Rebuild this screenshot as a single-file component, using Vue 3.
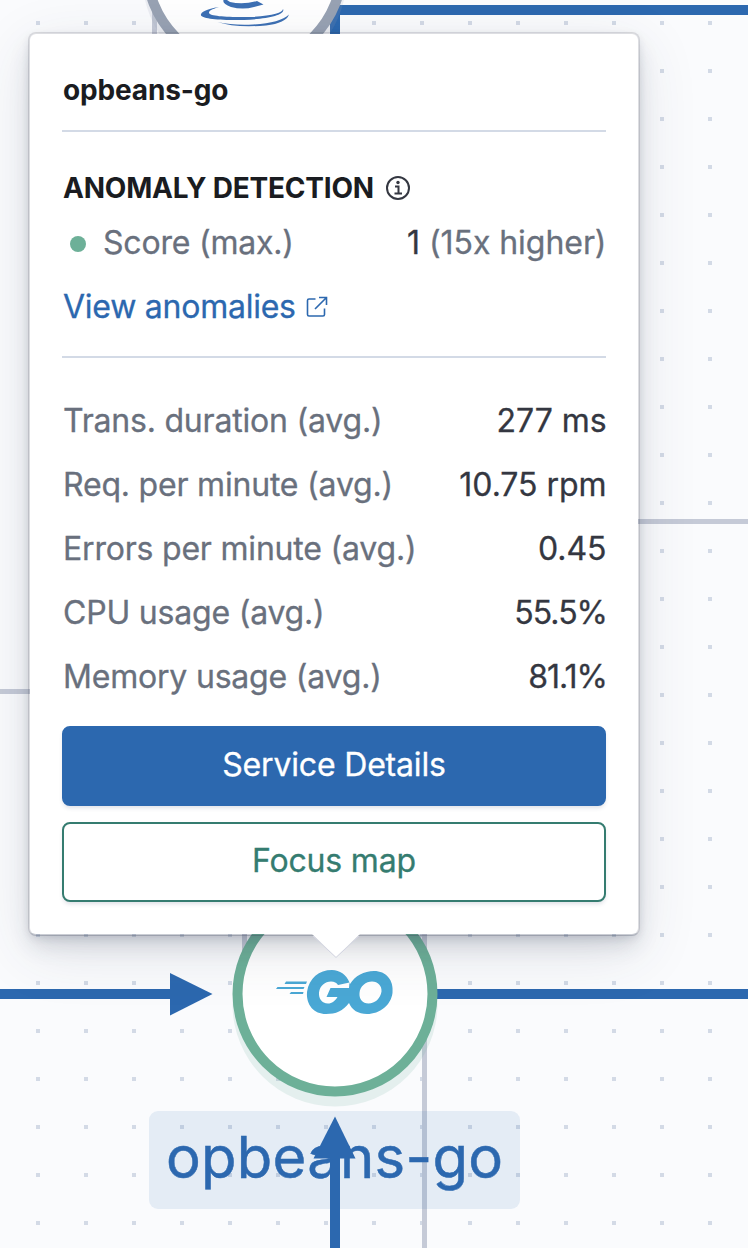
<script setup>
const metrics = [
  { label: 'Trans. duration (avg.)', value: '277 ms' },
  { label: 'Req. per minute (avg.)', value: '10.75 rpm' },
  { label: 'Errors per minute (avg.)', value: '0.45' },
  { label: 'CPU usage (avg.)', value: '55.5%' },
  { label: 'Memory usage (avg.)', value: '81.1%' }
]
</script>

<template>
  <main class="map">
    <!-- service map canvas -->
    <svg class="graph" width="748" height="1248" viewBox="0 0 748 1248">
      <defs>
        <pattern id="dots" x="36" y="21" width="48" height="48" patternUnits="userSpaceOnUse">
          <rect width="4" height="4" class="dot" />
        </pattern>
      </defs>
      <rect width="748" height="1248" fill="url(#dots)" />

      <g class="edge">
        <path d="M154.500 0V400M0 691.500H60M600 521.500H748M244.500 900V994M424.500 900V1248" />
      </g>
      <path class="edge-active" d="M335 60V10H748M430 994H748M0 994H175" />
      <path class="arrow" d="M170 973L212.500 994L170 1015.500Z" />

      <circle class="halo-gray" cx="244.500" cy="-22.500" r="102" />
      <circle class="node gray" cx="244.500" cy="-32" r="97.500" />
      <g class="java">
        <path d="M223.500 0Q222 4 231 7Q243 10 254 7L263.500 4.500L257 1Q243 5 230 2L227 0Z" />
        <path d="M219 7C205 9 200 13 201 15.500C203 19 223 20.500 244 20C267 19 286 15 283 9C283 13 269 17 243 17C224 17 210 16 209 13C208.500 10 215 8.500 219 7Z" />
        <path d="M217.500 22Q233 25.500 253 24.500Q280 23 289 14.500Q286 23 266 25.500Q235 28 217.500 22Z" />
      </g>

      <circle class="halo-green" cx="335" cy="1004" r="102.500" />
      <circle class="node green" cx="335" cy="994" r="97.500" />
      <g class="golang">
        <path d="M286 981.500H307L306 984H284.500ZM277.500 987H304.500L303.500 989H276ZM291 992H303.500L303 994H289.500Z" />
        <path fill-rule="evenodd" d="M349.500 982.500C346 974 340 970.500 332 970C319 970 309 978 307 992C306 1005 314 1014 326 1014C336 1014 343 1011 349 1003C352 1010 358 1014 367 1014C380 1014 391 1005 392.500 993C394 980 386 971 374 971C364 971 355 976 350 984ZM338 985L349.500 982.500L349 988H330.500L326.500 997H337.500C335 1001 332 1003.500 328 1003.500C321.500 1003.500 318.500 998 319 992.500C320 985.500 325 981.500 331 981.500Q336 981.500 338 985ZM372 981.500C378 981.500 382 986 381.500 991.500C380.500 998.500 375 1003.500 368.500 1003.500C362.500 1003.500 359 999 359.500 993C360 986 366 981.500 372 981.500Z" />
      </g>

      <rect class="label-bg" x="149" y="1111" width="371" height="98" rx="9" />
      <text class="label" x="166" y="1178" textLength="337">opbeans-go</text>
      <path class="edge-active" d="M335 1248V1150" />
      <path class="arrow" d="M335 1116.500L355.500 1158.500H313.500Z" />
    </svg>

    <section class="popover">
      <h3 class="title">opbeans-go</h3>
      <hr />
      <h4 class="subtitle">
        <span>ANOMALY DETECTION</span>
        <svg class="info" width="24" height="24" viewBox="0 0 24 24">
          <circle cx="12" cy="12" r="11" />
          <path d="M9 10.500H12.500V17.500M8.500 17.500H16" />
          <circle class="info-dot" cx="12" cy="6.500" r="1.700" />
        </svg>
      </h4>
      <div class="row score">
        <span class="name"><i class="health"></i><span>Score (max.)</span></span>
        <span class="value">1 <span class="muted">(15x higher)</span></span>
      </div>
      <a class="link">
        <span>View anomalies</span>
        <svg width="22" height="22" viewBox="0 0 22 22">
          <path d="M9.500 3H3Q1.500 3 1.500 4.500V18.500Q1.500 20 3 20H17Q18.500 20 18.500 18.500V12.500M9 13L20 2M13 1.500H20.500V9" />
        </svg>
      </a>
      <hr />
      <div class="metrics">
        <div v-for="item in metrics" :key="item.label" class="row">
          <span class="name">{{ item.label }}</span>
          <span class="value" :class="{ percent: item.value.endsWith('%') }">{{ item.value }}</span>
        </div>
      </div>
      <button class="btn primary">Service Details</button>
      <button class="btn secondary">Focus map</button>
      <svg class="pointer" width="50" height="25" viewBox="0 0 50 25">
        <path class="pointer-fill" d="M1 0H49L25 23Z" />
        <path class="pointer-line" d="M2 2L25 23.500L48 2" />
      </svg>
    </section>
  </main>
</template>

<style>
body {
  margin: 0;
  overflow: hidden;
}
</style>

<style scoped>
.map {
  position: relative;
  box-sizing: border-box;
  width: 748px;
  height: 1248px;
  padding: 32px 0 0 28px;
  overflow: hidden;
  background: #fafbfd;
  font-family: Inter, "Liberation Sans", sans-serif;
}

.graph {
  position: absolute;
  top: 0;
  left: 0;
}

.dot {
  fill: #d3dae6;
}

.edge {
  fill: none;
  stroke: #c5cad7;
  stroke-width: 5;
}

.edge-active {
  fill: none;
  stroke: #2c68af;
  stroke-width: 10;
}

.arrow {
  fill: #2c68af;
}

.node {
  fill: #fff;
  stroke-width: 10;
}

.gray {
  stroke: #98a2b3;
}

.green {
  stroke: #6db098;
}

.halo-gray {
  fill: rgba(152, 162, 179, 0.15);
}

.halo-green {
  fill: rgba(109, 176, 152, 0.15);
}

.java {
  fill: #3d70b4;
}

.golang {
  fill: #4aa8d5;
}

.label-bg {
  fill: rgba(44, 104, 175, 0.1);
}

.label {
  fill: #2c68af;
  stroke: #2c68af;
  stroke-width: 0.5px;
  font-size: 58px;
}

.popover {
  position: relative;
  display: flex;
  flex-direction: column;
  box-sizing: border-box;
  width: 612px;
  height: 904px;
  padding: 32px;
  border: 2px solid rgba(52, 55, 65, 0.14);
  border-bottom-color: rgba(52, 60, 85, 0.24);
  border-radius: 8px;
  background: #fff;
  background-clip: padding-box;
  box-shadow: 0 3px 8px -2px rgba(52, 60, 85, 0.16),
    0 12px 22px -4px rgba(52, 60, 85, 0.18),
    0 16px 60px 0 rgba(52, 60, 85, 0.12);
}

hr {
  flex: none;
  width: 100%;
  height: 2px;
  margin: 0;
  border: 0;
  background: #d3dae6;
}

.title {
  height: 48px;
  margin: 0 0 16px 1px;
  color: #1a1c21;
  font-size: 28px;
  font-weight: 700;
  line-height: 48px;
  letter-spacing: -0.15px;
}

.subtitle {
  display: flex;
  align-items: center;
  gap: 12px;
  height: 44px;
  margin: 34px 0 0 1px;
  color: #1a1c21;
  font-size: 28px;
  font-weight: 700;
  line-height: 44px;
  letter-spacing: -0.2px;
}

.info {
  fill: none;
  stroke: #343741;
  stroke-width: 2;
}

.info-dot {
  fill: #343741;
  stroke: none;
}

.row {
  display: flex;
  flex: none;
  align-items: center;
  justify-content: space-between;
  height: 64px;
  font-size: 32px;
  letter-spacing: -0.2px;
  white-space: nowrap;
  -webkit-text-stroke: 0.3px currentColor;
}

.name {
  display: flex;
  align-items: center;
  padding-left: 1px;
  color: #69707d;
}

.value {
  margin-right: -0.5px;
  color: #343741;
  letter-spacing: -0.05px;
}

.percent {
  margin-right: -1px;
  letter-spacing: -1px;
}

.muted {
  color: #69707d;
}

.health {
  width: 16px;
  height: 16px;
  margin: 4px 17px 0 7px;
  border-radius: 50%;
  background: #6db098;
}

.link {
  display: flex;
  align-items: center;
  gap: 10px;
  height: 64px;
  margin: 0 0 18px 1px;
  color: #2c68af;
  font-size: 32px;
  letter-spacing: -0.25px;
  -webkit-text-stroke: 0.3px currentColor;
}

.link svg {
  margin-top: 2px;
  fill: none;
  stroke: #2c68af;
  stroke-width: 1.6;
}

.metrics {
  padding: 30px 0 18px;
}

.btn {
  box-sizing: border-box;
  flex: none;
  width: 100%;
  height: 80px;
  padding: 0 0 4px;
  border: 2px solid #2c68af;
  border-radius: 8px;
  font-family: inherit;
  font-size: 32px;
  letter-spacing: -0.18px;
  box-shadow: 0 3px 4px -1px rgba(52, 65, 100, 0.16);
  -webkit-text-stroke: 0.3px currentColor;
}

.primary {
  margin-bottom: 16px;
  background: #2c68af;
  color: #fff;
}

.secondary {
  border-color: #357c70;
  background: #fff;
  color: #357c70;
}

/* arrow under the popover, pointing at the selected node */
.pointer {
  position: absolute;
  top: 900px;
  left: 281px;
}

.pointer-fill {
  fill: #fff;
}

.pointer-line {
  fill: none;
  stroke: #d3d5e2;
  stroke-width: 1;
}
</style>
